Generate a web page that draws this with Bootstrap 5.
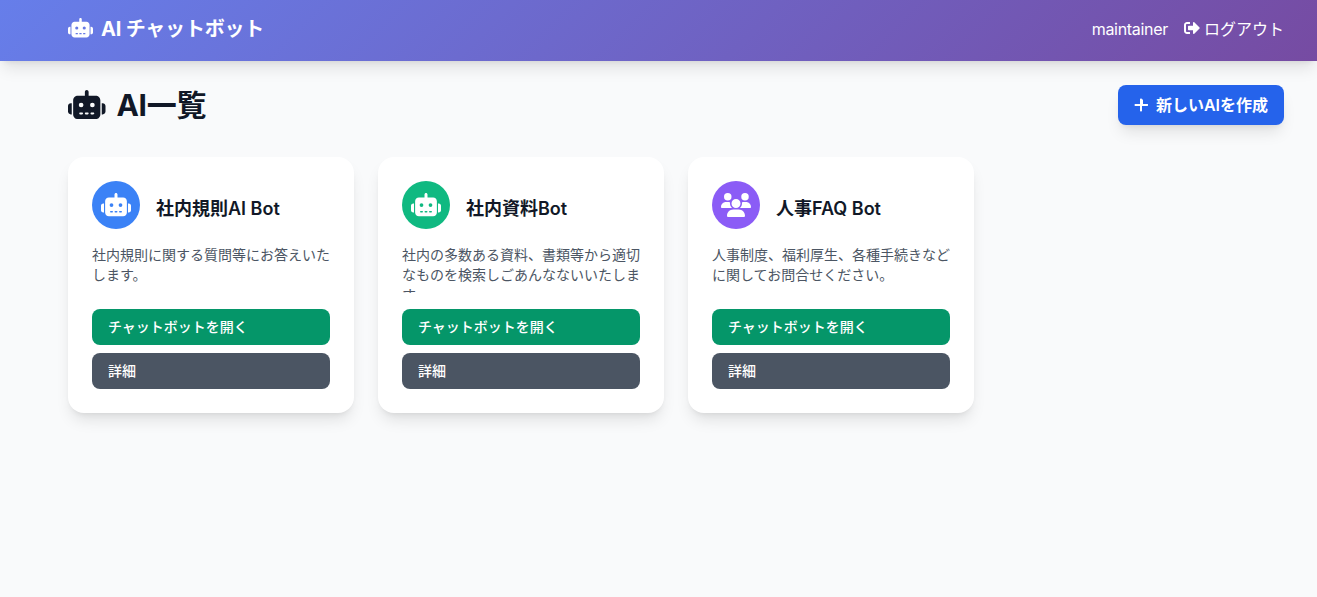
<!DOCTYPE html>
<html lang="ja">
  <head>
    <meta charset="utf-8">
    <title>AI チャットボット</title>
    <link href="https://cdn.jsdelivr.net/npm/bootstrap@5.3.3/dist/css/bootstrap.min.css" rel="stylesheet">
    <style>
      body { background: #f9fafb; font-family: Inter, "Noto Sans CJK JP", sans-serif; color: #111827; }
      .ico { fill: currentColor; display: block; flex: none; }
      .top-bar { height: 61px; padding: 0 33px 4px 68px; background: linear-gradient(135deg, #667eea 0%, #764ba2 100%); box-shadow: 0 10px 15px -3px rgba(0,0,0,.1), 0 4px 6px -4px rgba(0,0,0,.1); }
      .top-bar .ico { margin-bottom: 2px; }
      .brand-name { font-size: 20px; font-weight: 700; color: #fff; line-height: 28px; letter-spacing: -.2px; }
      .user-name, .logout-link { font-size: 16px; line-height: 24px; color: #fff; text-decoration: none; }
      .user-name { letter-spacing: -.3px; }
      .page-wrap { padding: 24px 33px 64px 68px; }
      .page-title { font-size: 30px; line-height: 36px; font-weight: 700; color: #111827; margin: 0; letter-spacing: -.3px; }
      .title-ico { margin-right: 3px; }
      .new-btn { background: #2563eb; border: 0; color: #fff; font-weight: 600; font-size: 16px; line-height: 24px; padding: 8px 16px; border-radius: 8px; box-shadow: 0 10px 15px -3px rgba(0,0,0,.1), 0 4px 6px -4px rgba(0,0,0,.1); }
      .new-btn:hover { background: #2563eb; color: #fff; }
      .bot-list { margin-top: 8px; }
      .bot-card { border: 0; border-radius: 16px; padding: 24px; background: #fff; box-shadow: 0 10px 15px -3px rgba(0,0,0,.1), 0 4px 6px -4px rgba(0,0,0,.1); }
      .bot-circle { width: 48px; height: 48px; color: #fff; flex: none; }
      .bg-blue { background: #3b82f6; }
      .bg-green { background: #10b981; }
      .bg-purple { background: #8b5cf6; }
      .bot-name { font-size: 18px; line-height: 28px; font-weight: 600; color: #111827; margin: 0; padding-top: 7px; }
      .bot-desc { font-size: 14px; line-height: 20px; height: 48px; overflow: hidden; color: #4b5563; margin: 16px 0; }
      .act-btn { display: block; text-align: left; font-size: 14px; font-weight: 500; line-height: 20px; padding: 8px 16px; border: 0; border-radius: 8px; color: #fff; }
      .act-open, .act-open:hover { background: #059669; color: #fff; }
      .act-info, .act-info:hover { background: #4b5563; color: #fff; }
    </style>
  </head>
  <body>
    <nav class="top-bar d-flex align-items-center justify-content-between">
      <div class="d-flex align-items-center gap-2">
        <svg class="ico text-white" width="25" height="20" viewBox="0 0 640 512"><use href="#robot"/></svg>
        <span class="brand-name">AI チャットボット</span>
      </div>
      <div class="d-flex align-items-center gap-3">
        <span class="user-name">maintainer</span>
        <a class="logout-link d-flex align-items-center gap-1" href="#">
          <svg class="ico" width="16" height="16" viewBox="0 0 512 512"><path d="M497 273L329 441c-15 15-41 4.5-41-17v-96H152c-13.3 0-24-10.7-24-24v-96c0-13.3 10.7-24 24-24h136V88c0-21.4 25.9-32 41-17l168 168c9.3 9.4 9.3 24.6 0 34zM192 436v-40c0-6.6-5.4-12-12-12H96c-17.7 0-32-14.3-32-32V160c0-17.7 14.3-32 32-32h84c6.6 0 12-5.4 12-12V76c0-6.6-5.4-12-12-12H96c-53 0-96 43-96 96v192c0 53 43 96 96 96h84c6.6 0 12-5.4 12-12z"/></svg>
          ログアウト
        </a>
      </div>
    </nav>

    <main class="page-wrap">
      <div class="d-flex align-items-center justify-content-between">
        <h1 class="page-title d-flex align-items-center gap-2">
          <svg class="ico title-ico" width="37.5" height="30" viewBox="0 0 640 512">
            <path id="robot" d="M320 0c17.7 0 32 14.3 32 32V96H472c44.2 0 80 35.8 80 80V416c0 44.2-35.8 80-80 80H168c-44.2 0-80-35.8-80-80V176c0-44.2 35.8-80 80-80H288V32c0-17.7 14.3-32 32-32zM208 384c-8.8 0-16 7.2-16 16s7.2 16 16 16h32c8.8 0 16-7.2 16-16s-7.2-16-16-16H208zm96 0c-8.8 0-16 7.2-16 16s7.2 16 16 16h32c8.8 0 16-7.2 16-16s-7.2-16-16-16H304zm96 0c-8.8 0-16 7.2-16 16s7.2 16 16 16h32c8.8 0 16-7.2 16-16s-7.2-16-16-16H400zM264 256a40 40 0 1 0 -80 0 40 40 0 1 0 80 0zm152 40a40 40 0 1 0 0-80 40 40 0 1 0 0 80zM48 224H64V416H48c-26.5 0-48-21.5-48-48V272c0-26.5 21.5-48 48-48zm544 0c26.5 0 48 21.5 48 48v96c0 26.5-21.5 48-48 48H576V224h16z"/>
          </svg>
          AI一覧
        </h1>
        <a class="btn new-btn d-flex align-items-center gap-2" href="#">
          <svg class="ico" width="14" height="16" viewBox="0 0 448 512"><path d="M256 80c0-17.7-14.3-32-32-32s-32 14.3-32 32V224H48c-17.7 0-32 14.3-32 32s14.3 32 32 32H192V432c0 17.7 14.3 32 32 32s32-14.3 32-32V288H432c17.7 0 32-14.3 32-32s-14.3-32-32-32H288V80z"/></svg>
          新しいAIを作成
        </a>
      </div>

      <div class="row row-cols-4 g-4 bot-list">
        <div class="col">
          <div class="card bot-card">
            <div class="d-flex align-items-center gap-3">
              <div class="bot-circle bg-blue rounded-circle d-flex align-items-center justify-content-center">
                <svg class="ico" width="30" height="24" viewBox="0 0 640 512"><use href="#robot"/></svg>
              </div>
              <h2 class="bot-name">社内規則AI Bot</h2>
            </div>
            <p class="bot-desc">社内規則に関する質問等にお答えいたします。</p>
            <div class="d-grid gap-2">
              <a class="btn act-btn act-open" href="#">チャットボットを開く</a>
              <a class="btn act-btn act-info" href="#">詳細</a>
            </div>
          </div>
        </div>
        <div class="col">
          <div class="card bot-card">
            <div class="d-flex align-items-center gap-3">
              <div class="bot-circle bg-green rounded-circle d-flex align-items-center justify-content-center">
                <svg class="ico" width="30" height="24" viewBox="0 0 640 512"><use href="#robot"/></svg>
              </div>
              <h2 class="bot-name">社内資料Bot</h2>
            </div>
            <p class="bot-desc">社内の多数ある資料、書類等から適切なものを検索しごあんなないいたします。</p>
            <div class="d-grid gap-2">
              <a class="btn act-btn act-open" href="#">チャットボットを開く</a>
              <a class="btn act-btn act-info" href="#">詳細</a>
            </div>
          </div>
        </div>
        <div class="col">
          <div class="card bot-card">
            <div class="d-flex align-items-center gap-3">
              <div class="bot-circle bg-purple rounded-circle d-flex align-items-center justify-content-center">
                <svg class="ico" width="30" height="24" viewBox="0 0 640 512"><path d="M144 0a80 80 0 1 1 0 160A80 80 0 1 1 144 0zM512 0a80 80 0 1 1 0 160A80 80 0 1 1 512 0zM0 298.7C0 239.8 47.8 192 106.7 192h42.7c15.9 0 31 3.5 44.6 9.7c-1.3 7.2-1.9 14.7-1.9 22.3c0 38.2 16.8 72.5 43.3 96c-.2 0-.4 0-.7 0H21.3C9.6 320 0 310.4 0 298.7zM405.3 320c-.2 0-.4 0-.7 0c26.6-23.5 43.3-57.8 43.3-96c0-7.6-.7-15-1.9-22.3c13.6-6.3 28.7-9.7 44.6-9.7h42.7C592.2 192 640 239.8 640 298.7c0 11.8-9.6 21.3-21.3 21.3H405.3zM224 224a96 96 0 1 1 192 0 96 96 0 1 1 -192 0zM128 485.3C128 411.7 187.7 352 261.3 352H378.7C452.3 352 512 411.7 512 485.3c0 14.7-11.9 26.7-26.7 26.7H154.7c-14.7 0-26.7-11.9-26.7-26.7z"/></svg>
              </div>
              <h2 class="bot-name">人事FAQ Bot</h2>
            </div>
            <p class="bot-desc">人事制度、福利厚生、各種手続きなどに関してお問合せください。</p>
            <div class="d-grid gap-2">
              <a class="btn act-btn act-open" href="#">チャットボットを開く</a>
              <a class="btn act-btn act-info" href="#">詳細</a>
            </div>
          </div>
        </div>
      </div>
    </main>
    <script src="https://cdn.jsdelivr.net/npm/bootstrap@5.3.3/dist/js/bootstrap.bundle.min.js"></script>
  </body>
</html>
